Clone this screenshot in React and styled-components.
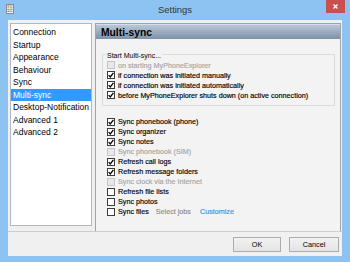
import React from 'react';
import styled, { createGlobalStyle } from 'styled-components';

const Global = createGlobalStyle`
  html, body { margin: 0; padding: 0; }
  body {
    width: 350px; height: 262px; overflow: hidden;
    background: #8DC3F2;
    font-family: "Liberation Sans", Arial, sans-serif;
  }
`;

const Window = styled.div`
  width: 350px; height: 262px; box-sizing: border-box;
  background: #8DC3F2;
  display: flex; flex-direction: column;
`;

const TitleBar = styled.div`
  height: 20px; flex: none;
  display: grid; grid-template-columns: 1fr auto 1fr; align-items: start;
`;

const AppIcon = styled.svg`
  margin: 4px 0 0 6px; display: block;
`;

const Title = styled.div`
  font-size: 9.4px; line-height: 20px; color: #333; text-align: center;
`;

const CloseButton = styled.div`
  justify-self: end; width: 19px; height: 13px; margin-right: 5px;
  background: #C75050; display: flex; align-items: center; justify-content: center;
`;

const Client = styled.div`
  margin: 0 8px; height: 236px; flex: none;
  background: #F0F0F0; display: flex; flex-direction: column;
`;

const Main = styled.div`
  height: 211px; box-sizing: border-box; flex: none;
  display: flex; gap: 3px; padding: 3px 1px 0 2px;
`;

const NavList = styled.ul`
  list-style: none; margin: 0; padding: 2px 0 0;
  width: 82px; height: 203px; box-sizing: border-box; flex: none;
  background: #fff; border: 1px solid #B5B7BD;
`;

const NavItem = styled.li`
  height: 12.5px; line-height: 12.5px; padding-left: 2px;
  font-size: 8.5px; white-space: nowrap;
  color: ${p => (p.$selected ? '#fff' : '#000')};
  background: ${p => (p.$selected ? '#3399FF' : 'transparent')};
`;

const Panel = styled.div`
  flex: 1; box-sizing: border-box;
  border: 1px solid #A3A3A3; border-bottom: none;
  background: #F3F3F3; display: flex; flex-direction: column;
`;

const PanelHeader = styled.div`
  height: 15px; line-height: 15px; padding-left: 5px; flex: none;
  background: linear-gradient(#B8C6D6, #7F91A7);
  border-top: 1px solid #D6DFEA; box-sizing: border-box;
  font-size: 10.3px; font-weight: bold; color: #000;
`;

const PanelBody = styled.div`
  padding: 15px 5px 0 6px;
`;

const Group = styled.div`
  border: 1px solid #D9DDE2; padding: 0 4px 5px 4px;
`;

const GroupTitle = styled.div`
  width: fit-content; margin: -4px 0 0 -1px; padding: 0 1px;
  background: #F3F3F3; font-size: 7px; line-height: 9px; color: #000;
`;

const OptionList = styled.div`
  margin: ${p => (p.$offset ? '10.5px 0 0 5px' : '0')};
`;

const Row = styled.div`
  height: 10px; display: flex; align-items: center; gap: 3px;
  font-size: 7.2px; white-space: nowrap;
  -webkit-text-stroke: 0.15px currentColor;
  color: ${p => (p.$disabled ? '#A6A6A6' : '#000')};
`;

const Box = styled.span`
  width: 8px; height: 8px; box-sizing: border-box; flex: none;
  border: 1px solid ${p => (p.$disabled ? '#C4C4C4' : '#3C3C3C')};
  background: ${p => (p.$disabled ? '#E8E8E8' : '#fff')};
  display: flex; align-items: center; justify-content: center;
`;

const Extra = styled.span`
  margin-left: ${p => p.$gap}px;
  color: ${p => p.$color};
`;

const Separator = styled.div`
  height: 1px; flex: none; background: #CDCDCD;
`;

const Footer = styled.div`
  display: flex; justify-content: flex-end; gap: 8px;
  padding: 5px 3px 0 0;
`;

const Button = styled.button`
  width: ${p => p.$w}px; height: 15px; box-sizing: border-box; padding: 0;
  border: 1px solid #ACACAC; background: linear-gradient(#F2F2F2, #E4E4E4);
  font-family: "Liberation Sans", Arial, sans-serif; font-size: 7.3px; color: #000;
`;

function Check({ checked, disabled }) {
  return (
    <Box $disabled={disabled}>
      {checked && (
        <svg width="6" height="6" viewBox="0 0 6 6">
          <path d="M0.6 3.1 L2.3 4.9 L5.4 0.8" fill="none" stroke="#000" strokeWidth="1.3" />
        </svg>
      )}
    </Box>
  );
}

function Option({ label, checked, disabled, children }) {
  return (
    <Row $disabled={disabled}>
      <Check checked={checked} disabled={disabled} />
      <span>{label}</span>
      {children}
    </Row>
  );
}

const nav = ['Connection', 'Startup', 'Appearance', 'Behaviour', 'Sync', 'Multi-sync', 'Desktop-Notification', 'Advanced 1', 'Advanced 2'];

const startOptions = [
  { label: 'on starting MyPhoneExplorer', disabled: true },
  { label: 'if connection was initiated manually', checked: true },
  { label: 'if connection was initiated automatically', checked: true },
  { label: 'before MyPhoneExplorer shuts down (on active connection)', checked: true },
];

const syncOptions = [
  { label: 'Sync phonebook (phone)', checked: true },
  { label: 'Sync organizer', checked: true },
  { label: 'Sync notes', checked: true },
  { label: 'Sync phonebook (SIM)', disabled: true },
  { label: 'Refresh call logs', checked: true },
  { label: 'Refresh message folders', checked: true },
  { label: 'Sync clock via the Internet', disabled: true },
  { label: 'Refresh file lists' },
  { label: 'Sync photos' },
];

export default function App() {
  return (
    <>
      <Global />
      <Window>
        <TitleBar>
          <AppIcon width="8" height="10" viewBox="0 0 8 10">
            <rect x="0.5" y="0.5" width="7" height="9" fill="#F4F4F4" stroke="#8A8A8A" />
            <rect x="1.5" y="1.5" width="2" height="1" fill="#D04A4A" />
            <rect x="1.5" y="3.3" width="2" height="1" fill="#E8A030" />
            <rect x="1.5" y="5.1" width="2" height="1" fill="#4CAF50" />
            <rect x="1.5" y="6.9" width="2" height="1" fill="#3F7FD0" />
            <rect x="4" y="1.5" width="2.5" height="1" fill="#9A9A9A" />
            <rect x="4" y="3.3" width="2.5" height="1" fill="#9A9A9A" />
            <rect x="4" y="5.1" width="2.5" height="1" fill="#9A9A9A" />
            <rect x="4" y="6.9" width="2.5" height="1" fill="#9A9A9A" />
          </AppIcon>
          <Title>Settings</Title>
          <CloseButton>
            <svg width="5" height="5" viewBox="0 0 5 5">
              <path d="M0.5 0.5 L4.5 4.5 M4.5 0.5 L0.5 4.5" stroke="#fff" strokeWidth="1.3" />
            </svg>
          </CloseButton>
        </TitleBar>
        <Client>
          <Main>
            <NavList>
              {nav.map(n => (
                <NavItem key={n} $selected={n === 'Multi-sync'}>{n}</NavItem>
              ))}
            </NavList>
            <Panel>
              <PanelHeader>Multi-sync</PanelHeader>
              <PanelBody>
                <Group>
                  <GroupTitle>Start Multi-sync...</GroupTitle>
                  <OptionList>
                    {startOptions.map(o => (
                      <Option key={o.label} {...o} />
                    ))}
                  </OptionList>
                </Group>
                <OptionList $offset>
                  {syncOptions.map(o => (
                    <Option key={o.label} {...o} />
                  ))}
                  <Option label="Sync files">
                    <Extra $gap={4} $color="#8C8C8C">Select jobs</Extra>
                    <Extra $gap={6} $color="#3A8EE0">Customize</Extra>
                  </Option>
                </OptionList>
              </PanelBody>
            </Panel>
          </Main>
          <Separator />
          <Footer>
            <Button $w={48}>OK</Button>
            <Button $w={50}>Cancel</Button>
          </Footer>
        </Client>
      </Window>
    </>
  );
}
